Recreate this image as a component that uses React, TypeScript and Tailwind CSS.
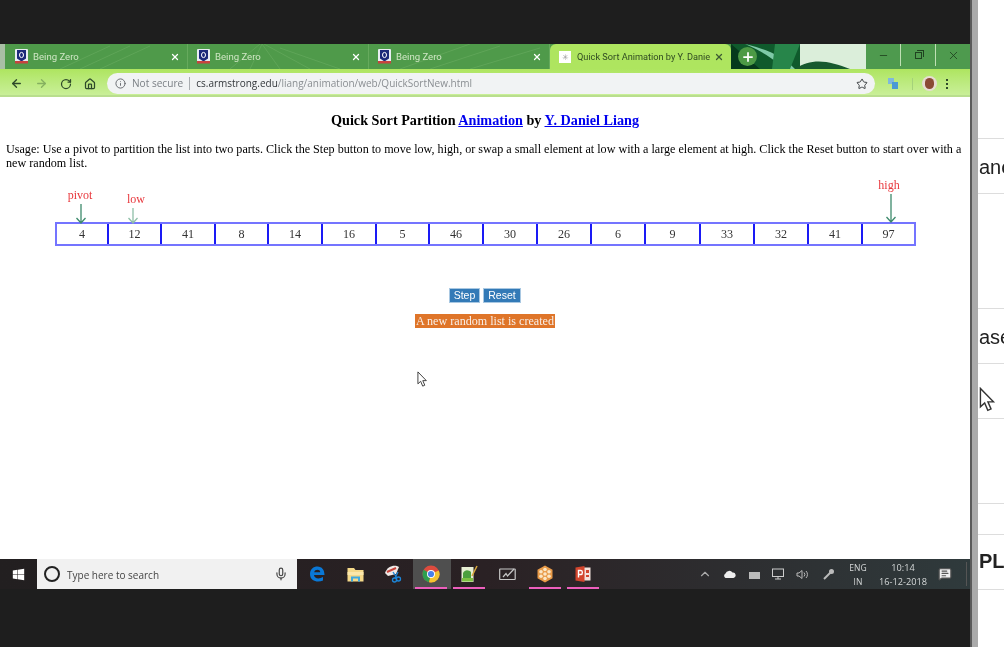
import React from 'react';
import { ArrowLeft, ArrowRight, RotateCw, Home, Info, Star, X, Plus, Minus, ChevronUp, Mic, MessageSquareText } from 'lucide-react';
import { FaWindows } from 'react-icons/fa';

const values = [4, 12, 41, 8, 14, 16, 5, 46, 30, 26, 6, 9, 33, 32, 41, 97];

const BeingZeroIcon = () => (
  <svg width="13" height="15" viewBox="0 0 13 15" className="shrink-0">
    <rect x="0" y="0" width="13" height="14" rx="1" fill="#e9edf3" />
    <path d="M2 1h9v8.5l-4.5 3-4.5-3z" fill="#1c2a7a" />
    <rect x="0" y="12" width="13" height="2.5" fill="#c8423f" />
    <ellipse cx="6.5" cy="6" rx="2" ry="2.6" fill="none" stroke="#fff" strokeWidth="1" />
  </svg>
);

const Tab = ({ width, pad }: { width: string; pad: string }) => (
  <div className={`${width} ${pad} flex h-full items-center pr-[7px] border-r border-[#7dba70]/50`}>
    <BeingZeroIcon />
    <span className="ml-[5px] pt-px font-['Roboto',sans-serif] text-[9.6px] text-[#cfe6c4]">Being Zero</span>
    <X size={10} strokeWidth={3} className="ml-auto text-white" />
  </div>
);

const LeafArt = () => (
  <svg className="absolute inset-0" width="970" height="25" viewBox="0 0 970 25">
    <rect x="0" y="0" width="5" height="25" fill="#a9bfa5" />
    <g stroke="#7ab86f" strokeWidth="0.6" fill="none" opacity="0.6">
      <path d="M60 25 L110 2 M80 25 L130 2 M100 25 L150 2 M230 25 L260 0 M250 25 L262 0 M280 25 L262 0 M310 25 L264 0 M340 25 L280 4 M400 25 L470 0 M430 25 L500 2 M470 25 L540 4" />
    </g>
    <rect x="731" y="0" width="70" height="25" fill="#0f5a2c" />
    <path d="M731 0 L760 25 H731 Z" fill="#06391c" />
    <path d="M745 0 C770 6 785 14 795 25 L785 25 C772 14 760 6 745 0Z" fill="#7fc9a8" />
    <path d="M775 0 L800 0 L790 25 L772 25 Z" fill="#27854a" />
    <rect x="800" y="0" width="70" height="25" fill="#dbeeda" />
    <path d="M795 25 C812 13 830 17 850 25 Z" fill="#17592f" />
    <rect x="866" y="0" width="104" height="25" fill="#4e9a4e" />
  </svg>
);

const ChromeIcon = () => (
  <svg width="18" height="18" viewBox="0 0 18 18">
    <circle cx="9" cy="9" r="8.5" fill="#dd4b3e" />
    <path d="M9 9 L1.6 4.8 A8.5 8.5 0 0 0 7 17.3 Z" fill="#2f9e4f" />
    <path d="M9 9 L16.7 5.4 A8.5 8.5 0 0 1 7 17.3 Z" fill="#f4c430" />
    <circle cx="9" cy="9" r="4" fill="#fff" />
    <circle cx="9" cy="9" r="3.1" fill="#4a80ea" />
  </svg>
);

const EdgeIcon = () => (
  <svg width="16" height="16" viewBox="0 0 16 16">
    <path d="M1 8 C1 3 4.500 0.500 8.500 0.500 C13 0.500 15.500 4 15.500 9 H5 C5.300 12.500 10 13.500 14 11 V14.500 C9 16.800 1 15.500 1 8Z M5.200 6.200 H11.300 C11 3 6 3 5.200 6.200Z" fill="#0a78d7" fillRule="evenodd" />
  </svg>
);

const FolderIcon = () => (
  <svg width="17" height="15" viewBox="0 0 17 15">
    <path d="M0.500 1 H7 L8.500 3 H16.500 V14.500 H0.500Z" fill="#f5d98a" />
    <rect x="0.500" y="5" width="16" height="3" fill="#fbe7ab" />
    <path d="M4 14.500 V9.500 H13 V14.500 H11 V11.500 H6 V14.500Z" fill="#3fa9df" />
  </svg>
);

const SnipIcon = () => (
  <svg width="18" height="18" viewBox="0 0 18 18">
    <path d="M1 8 C3 1 11 -1 15 2 L12 9 L4 11Z" fill="#efe9e6" />
    <path d="M3 7 L12 3" stroke="#c8443c" strokeWidth="2" />
    <path d="M9 7 L13 13 M14 7 L11 13" stroke="#1d86d8" strokeWidth="1.3" fill="none" />
    <circle cx="10.500" cy="15" r="2" fill="none" stroke="#1d86d8" strokeWidth="1.300" />
    <circle cx="14.500" cy="14" r="2" fill="none" stroke="#1d86d8" strokeWidth="1.300" />
  </svg>
);

const NotepadIcon = () => (
  <svg width="17" height="18" viewBox="0 0 17 18">
    <rect x="0.500" y="2" width="12" height="15" fill="#e7efd4" />
    <path d="M2 8 C4 4 8 5 10 7 V13 H2Z" fill="#4ca03e" />
    <rect x="1" y="13" width="11" height="3.500" fill="#7dc242" />
    <path d="M11 11 L16 1" stroke="#d7a63a" strokeWidth="1.500" />
  </svg>
);

const WhiteboardIcon = () => (
  <svg width="17" height="14" viewBox="0 0 17 14" fill="none" stroke="#c7c7c7" strokeWidth="1.200">
    <rect x="0.700" y="2" width="15.500" height="10.500" rx="0.500" />
    <path d="M4 10 L7 6.500 L8.500 9 L15 2" />
  </svg>
);

const FlowerIcon = () => (
  <svg width="18" height="18" viewBox="0 0 18 18">
    <path d="M9 0.500 L16.500 4.800 V13.200 L9 17.500 L1.500 13.200 V4.800Z" fill="#e89a48" />
    {[[9, 4.500], [13, 6.800], [13, 11.200], [9, 13.500], [5, 11.200], [5, 6.800], [9, 9]].map(([cx, cy], i) => (
      <circle key={i} cx={cx} cy={cy} r="1.800" fill="#fbe6c6" />
    ))}
  </svg>
);

const PowerPointIcon = () => (
  <svg width="16" height="16" viewBox="0 0 16 16">
    <rect x="7" y="1.500" width="8.500" height="13" fill="#f4e3dd" />
    <path d="M0.500 1.500 L9.500 0 V16 L0.500 14.500Z" fill="#d2452d" />
    <path d="M3.500 11.500 V4.500 H6 C7.800 4.500 7.800 8.500 6 8.500 H3.500" stroke="#fff" strokeWidth="1.400" fill="none" />
    <rect x="11" y="4" width="3" height="3" fill="#d2452d" />
    <rect x="11" y="9" width="3" height="2" fill="#d2452d" />
  </svg>
);

const TaskIcon = ({ children, active, running }: { children: React.ReactNode; active?: boolean; running?: boolean }) => (
  <div className={`relative flex h-full w-[38px] items-center justify-center pr-[2px] ${active ? 'bg-[#4f4f4f]' : ''}`}>
    {children}
    {running && <div className="absolute bottom-0 left-[2px] right-[4px] h-[2px] bg-[#ec5fbd]" />}
  </div>
);

const CursorIcon = ({ size, className }: { size: number; className: string }) => (
  <svg className={className} width={size} height={size * 1.5} viewBox="0 0 12 18">
    <path d="M1 1 V14 L4 11.200 L6.200 16.500 L8.500 15.500 L6.300 10.500 H10.200Z" fill="#fff" stroke="#333" strokeWidth="1" />
  </svg>
);

const Marker = ({ label, left, top, arrowHeight, arrowShift, tone }: { label: string; left: number; top: number; arrowHeight: number; arrowShift: number; tone: string }) => (
  <div className="absolute flex w-[50px] -translate-x-1/2 flex-col items-center" style={{ left, top }}>
    <span className="text-[12px] leading-[14px] text-[#e8383d]">{label}</span>
    <svg width="12" height={arrowHeight} viewBox={`0 0 12 ${arrowHeight}`} fill="none" stroke={tone} strokeWidth="1.300" className="mt-[2px]" style={{ marginLeft: arrowShift }}>
      <path d={`M6 0 V${arrowHeight - 1} M1.500 ${arrowHeight - 6} L6 ${arrowHeight - 1} L10.500 ${arrowHeight - 6}`} />
    </svg>
  </div>
);

export default function App() {
  return (
    <div className="flex h-[647px] w-[1004px] overflow-hidden bg-white font-['Liberation_Sans',sans-serif] blur-[0.35px]">
      <div className="relative flex w-[970px] shrink-0 flex-col bg-[#1e1e1e]">
        <div className="h-[44px] shrink-0" />

        {/* tab strip */}
        <div className="relative flex h-[25px] shrink-0 bg-[#4f9a4a] font-['Open_Sans',sans-serif]">
          <LeafArt />
          <div className="relative flex h-full items-center">
            <Tab width="w-[188px]" pad="pl-[15px]" />
            <Tab width="w-[181px]" pad="pl-[9px]" />
            <Tab width="w-[181px]" pad="pl-[9px]" />
            <div className="flex h-full w-[181px] items-center rounded-t-[6px] bg-[#aee55f] pl-[9px] pr-[7px]">
              <div className="flex h-[12px] w-[12px] shrink-0 items-center justify-center bg-white text-[8px] text-[#999]">✳</div>
              <span className="ml-[6px] w-[134px] overflow-hidden whitespace-nowrap pt-px font-['Roboto',sans-serif] text-[9.2px] text-[#2f4a22]">Quick Sort Animation by Y. Danie</span>
              <X size={10} strokeWidth={3} className="ml-auto text-[#3d5a33]" />
            </div>
            <div className="ml-[7px] flex h-[19px] w-[19px] items-center justify-center rounded-full bg-[#4d9a45]">
              <Plus size={14} strokeWidth={3} className="text-white" />
            </div>
          </div>
          <div className="absolute right-0 top-0 flex h-[22px] gap-px bg-[#bfe0b4]">
            <div className="flex h-full w-[33px] items-center justify-center bg-[#4e9a4e]">
              <Minus size={11} className="text-[#234a22]" />
            </div>
            <div className="flex h-full w-[34px] items-center justify-center bg-[#4e9a4e]">
              <div className="relative h-[7px] w-[7px] border border-[#1f4220] after:absolute after:-right-[3px] after:-top-[3px] after:h-[7px] after:w-[7px] after:border-r after:border-t after:border-[#1f4220]" />
            </div>
            <div className="flex h-full w-[34px] items-center justify-center bg-[#4e9a4e]">
              <X size={13} strokeWidth={1.5} className="text-[#1f3d1f]" />
            </div>
          </div>
        </div>

        {/* toolbar */}
        <div className="flex h-[28px] shrink-0 items-center border-b-2 border-[#b9de8e] bg-gradient-to-b from-[#aee55f] to-[#c9ef98] pt-[3px] font-['Open_Sans',sans-serif]">
          <div className="flex w-[107px] shrink-0 items-center pl-[10px] text-[#2e4a2a]">
            <ArrowLeft size={13} strokeWidth={2.5} />
            <ArrowRight size={13} strokeWidth={2.5} className="ml-[12px] text-[#85b060]" />
            <RotateCw size={12} strokeWidth={2.5} className="ml-[12px]" />
            <Home size={12} strokeWidth={2.5} className="ml-[12px]" />
          </div>
          <div className="flex h-[21px] w-[768px] shrink-0 items-center rounded-full bg-[#f1f3f4] pl-[8px] pr-[7px]">
            <Info size={11} className="text-[#5f6368]" />
            <span className="ml-[6px] text-[10.1px] text-[#7a7f84]">Not secure</span>
            <div className="ml-[6px] h-[13px] w-px bg-[#a9adb0]" />
            <span className="ml-[6px] text-[10px] text-[#8a8e92]"><span className="text-[#33373b]">cs.armstrong.edu</span>/liang/animation/web/QuickSortNew.html</span>
            <Star size={12} className="ml-auto text-[#3c4043]" />
          </div>
          <div className="flex flex-1 items-center">
            <svg width="10" height="11" viewBox="0 0 10 11" className="ml-[13px]">
              <rect x="0" y="0" width="6" height="6" fill="#7fb8dc" />
              <rect x="4" y="4" width="6" height="7" fill="#4a9ad4" />
            </svg>
            <div className="ml-[14px] h-[12px] w-px bg-[#a5d27a]" />
            <div className="ml-[9px] flex h-[15px] w-[15px] items-center justify-center rounded-full bg-[#e8dcd4]">
              <div className="h-[11px] w-[9px] rounded-full bg-[#8a4a35]" />
            </div>
            <div className="ml-[9px] flex flex-col gap-[2px]">
              <div className="h-[2px] w-[2px] bg-[#2e4a2a]" />
              <div className="h-[2px] w-[2px] bg-[#2e4a2a]" />
              <div className="h-[2px] w-[2px] bg-[#2e4a2a]" />
            </div>
          </div>
        </div>

        {/* page */}
        <div className="relative flex h-[462px] shrink-0 flex-col bg-white font-['Liberation_Serif',serif] text-black">
          <h3 className="mt-[15px] text-center text-[14.2px] font-bold leading-[17px]">
            Quick Sort Partition <a className="text-[#0000ee] underline">Animation</a> by <a className="text-[#0000ee] underline">Y. Daniel Liang</a>
          </h3>
          <p className="mx-[6px] mt-[13px] text-[12.14px] leading-[14px]">
            Usage: Use a pivot to partition the list into two parts. Click the Step button to move low, high, or swap a small element at low with a large element at high. Click the Reset button to start over with a new random list.
          </p>

          <div className="relative mt-[52px] ml-[55px] grid h-[24px] w-[861px] grid-cols-[52px_53px_54px_53px_54px_54px_53px_54px_54px_54px_54px_55px_54px_54px_54px_1fr] border-2 border-[#7474ff]">
            {values.map((v, i) => (
              <div key={i} className={`flex items-center justify-center text-[12.1px] text-[#333] ${i < 15 ? 'border-r-2 border-[#1a1af5]' : ''}`}>{v}</div>
            ))}
            <Marker label="pivot" left={23} top={-36} arrowHeight={20} arrowShift={2} tone="#3d8a6c" />
            <Marker label="low" left={79} top={-32} arrowHeight={16} arrowShift={-6} tone="#8fbfa8" />
            <Marker label="high" left={832} top={-46} arrowHeight={29} arrowShift={3} tone="#3d8a6c" />
          </div>

          <div className="mt-[42px] flex justify-center gap-[3px] font-['Liberation_Sans',sans-serif]">
            <button className="h-[15px] w-[31px] border border-[#a9c8e2] bg-[#337ab7] text-[10.5px] leading-[13px] text-white">Step</button>
            <button className="h-[15px] w-[38px] border border-[#a9c8e2] bg-[#337ab7] text-[10.5px] leading-[13px] text-white">Reset</button>
          </div>
          <div className="mt-[11px] self-center bg-[#df7529] px-px text-[12.1px] leading-[14px] text-[#f8eee6]">A new random list is created</div>
          <CursorIcon size={11} className="absolute left-[417px] top-[274px]" />
        </div>

        {/* taskbar */}
        <div className="flex h-[30px] shrink-0 items-center bg-gradient-to-r from-[#221f20] via-[#2a2124] to-[#2f3a3c] font-['Open_Sans',sans-serif]">
          <div className="flex h-full w-[37px] items-center justify-center text-white">
            <FaWindows size={13} />
          </div>
          <div className="flex h-full w-[260px] items-center bg-[#f1f1f1] pl-[7px] pr-[9px]">
            <div className="h-[16px] w-[16px] rounded-full border-[2.5px] border-[#222]" />
            <span className="ml-[7px] pt-[2px] text-[10px] text-[#444]">Type here to search</span>
            <Mic size={14} className="ml-auto text-[#444]" />
          </div>
          <div className="ml-[2px] flex h-full">
            <TaskIcon><EdgeIcon /></TaskIcon>
            <TaskIcon><FolderIcon /></TaskIcon>
            <TaskIcon><SnipIcon /></TaskIcon>
            <TaskIcon active running><ChromeIcon /></TaskIcon>
            <TaskIcon running><NotepadIcon /></TaskIcon>
            <TaskIcon><WhiteboardIcon /></TaskIcon>
            <TaskIcon running><FlowerIcon /></TaskIcon>
            <TaskIcon running><PowerPointIcon /></TaskIcon>
          </div>
          <div className="ml-auto flex h-full items-center pr-[3px] text-[#d5d8d8]">
            <ChevronUp size={14} className="mr-[11px] text-[#aaa]" />
            <svg width="13" height="8" viewBox="0 0 13 8" className="mr-[12px]"><path d="M2.500 8 A2.500 2.500 0 0 1 2.500 3.500 A4 4 0 0 1 9.500 2.500 A2.800 2.800 0 0 1 10.500 8Z" fill="#eee" /></svg>
            <svg width="12" height="9" viewBox="0 0 12 9" className="mr-[11px]"><rect x="1" y="2" width="11" height="7" fill="#bbb" /></svg>
            <svg width="13" height="12" viewBox="0 0 13 12" fill="none" stroke="#ccc" className="mr-[12px]"><rect x="1.500" y="1" width="11" height="7.500" /><path d="M7 8.500 V11 M4 11 H10" /></svg>
            <svg width="13" height="11" viewBox="0 0 13 11" fill="none" stroke="#bbb" className="mr-[14px]"><path d="M1 4 H3 L6 1.500 V9.500 L3 7 H1Z M8 3.500 A3 3 0 0 1 8 7.500 M10 2 A5 5 0 0 1 10 9" /></svg>
            <svg width="11" height="11" viewBox="0 0 11 11" fill="none" stroke="#bbb" strokeWidth="2" className="mr-[10px]"><path d="M1 10 L9 2" /><circle cx="8.500" cy="2.500" r="1.500" /></svg>
            <div className="flex w-[28px] flex-col items-center pt-[2px] text-[8.5px] leading-[14px]"><span>ENG</span><span>IN</span></div>
            <div className="ml-[5px] flex w-[52px] flex-col items-center pt-[2px] text-[9.2px] leading-[14px]"><span>10:14</span><span>16-12-2018</span></div>
            <MessageSquareText size={14} fill="#eee" className="ml-[9px] mr-[14px] text-[#555]" />
            <div className="h-[24px] w-px bg-[#555]" />
          </div>
        </div>
        <div className="flex-1" />
      </div>

      {/* window behind */}
      <div className="w-[2px] shrink-0 bg-[#5a5a5a]" />
      <div className="w-[6px] shrink-0 bg-[#aaaaaa]" />
      <div className="relative flex-1 overflow-hidden whitespace-nowrap bg-white text-[20px] leading-[23px] text-[#222]">
        <div className="mt-[138px] flex h-[56px] items-center border-y border-[#ddd] pl-px pt-[2px]">anc</div>
        <div className="mt-[114px] flex h-[56px] items-center border-y border-[#ddd] pl-px pt-[2px]">ase</div>
        <div className="h-[55px] border-b border-[#ddd]" />
        <div className="mt-[84px] h-[32px] border-y border-[#ddd]" />
        <div className="flex h-[55px] items-start border-b border-[#ddd] pl-px pt-[15px] font-bold">PL</div>
        <CursorIcon size={17} className="absolute left-[1px] top-[387px]" />
      </div>
    </div>
  );
}
